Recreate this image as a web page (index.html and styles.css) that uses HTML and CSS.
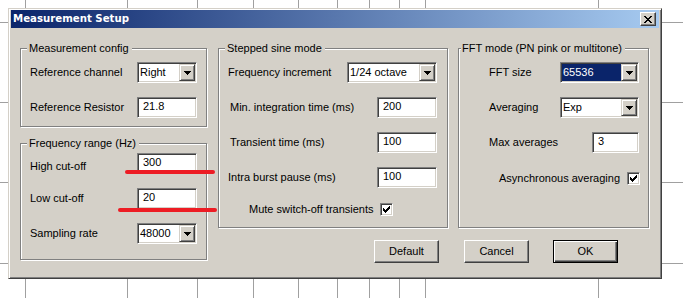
FILE: index.html
```html
<!DOCTYPE html>
<html>
<head>
<meta charset="utf-8">
<title>Measurement Setup</title>
<link rel="stylesheet" href="styles.css">
</head>
<body>
<div class="stage">
  <svg class="grid" width="683" height="298" viewBox="0 0 683 298" shape-rendering="crispEdges">
    <g stroke="#a0a0a0" stroke-width="1">
      <line x1="25.5" y1="0" x2="25.5" y2="298"/>
      <line x1="127.5" y1="0" x2="127.5" y2="298"/>
      <line x1="197.5" y1="0" x2="197.5" y2="298"/>
      <line x1="253.5" y1="0" x2="253.5" y2="298"/>
      <line x1="298.5" y1="0" x2="298.5" y2="298"/>
      <line x1="337.5" y1="0" x2="337.5" y2="298"/>
      <line x1="369.5" y1="0" x2="369.5" y2="298"/>
      <line x1="399.5" y1="0" x2="399.5" y2="298"/>
      <line x1="425.5" y1="0" x2="425.5" y2="298"/>
      <line x1="598.5" y1="0" x2="598.5" y2="298"/>
      <line x1="0" y1="22.5" x2="683" y2="22.5"/>
      <line x1="0" y1="102.5" x2="683" y2="102.5"/>
      <line x1="0" y1="182.5" x2="683" y2="182.5"/>
      <line x1="0" y1="263.5" x2="683" y2="263.5"/>
    </g>
  </svg>

  <div class="dialog">
    <div class="titlebar">
      <span class="title">Measurement Setup</span>
      <span class="close-btn">
        <svg width="8" height="7" viewBox="0 0 8 7" shape-rendering="crispEdges"><path fill="#000" d="M0 0h2v1h-2z M6 0h2v1h-2z M1 1h2v1h-2z M5 1h2v1h-2z M2 2h4v1h-4z M3 3h2v1h-2z M2 4h4v1h-4z M1 5h2v1h-2z M5 5h2v1h-2z M0 6h2v1h-2z M6 6h2v1h-2z"/></svg>
      </span>
    </div>

    <div class="client">
      <div class="col-left">
        <div class="group g1">
          <span class="legend">Measurement config</span>
          <div class="row">
            <span class="lbl">Reference channel</span>
            <div class="combo w60"><span class="val">Right</span><span class="drop"><svg width="7" height="4" viewBox="0 0 7 4" shape-rendering="crispEdges"><path fill="#000" d="M0 0H7V1H6V2H5V3H4V4H3V3H2V2H1V1H0Z"/></svg></span></div>
          </div>
          <div class="row">
            <span class="lbl">Reference Resistor</span>
            <div class="edit w60">21.8</div>
          </div>
        </div>

        <div class="group g2">
          <span class="legend">Frequency range (Hz)</span>
          <div class="row">
            <span class="lbl lbl-low">High cut-off</span>
            <div class="edit w60">300</div>
          </div>
          <div class="row">
            <span class="lbl">Low cut-off</span>
            <div class="edit w60">20</div>
          </div>
          <div class="row">
            <span class="lbl">Sampling rate</span>
            <div class="combo w60"><span class="val">48000</span><span class="drop"><svg width="7" height="4" viewBox="0 0 7 4" shape-rendering="crispEdges"><path fill="#000" d="M0 0H7V1H6V2H5V3H4V4H3V3H2V2H1V1H0Z"/></svg></span></div>
          </div>
        </div>
      </div>

      <div class="col-right">
        <div class="group g3">
          <span class="legend">Stepped sine mode</span>
          <div class="row">
            <span class="lbl">Frequency increment</span>
            <div class="combo w89"><span class="val">1/24 octave</span><span class="drop"><svg width="7" height="4" viewBox="0 0 7 4" shape-rendering="crispEdges"><path fill="#000" d="M0 0H7V1H6V2H5V3H4V4H3V3H2V2H1V1H0Z"/></svg></span></div>
          </div>
          <div class="row">
            <span class="lbl ind">Min. integration time (ms)</span>
            <div class="edit w60">200</div>
          </div>
          <div class="row">
            <span class="lbl ind">Transient time (ms)</span>
            <div class="edit w60">100</div>
          </div>
          <div class="row">
            <span class="lbl">Intra burst pause (ms)</span>
            <div class="edit w60">100</div>
          </div>
          <div class="chkrow chk-mute">
            <span class="lbl-c">Mute switch-off transients</span>
            <span class="check"><svg width="7" height="7" viewBox="0 0 7 7" shape-rendering="crispEdges"><path fill="#000" d="M0 2H1V3H2V4H3V3H4V2H5V1H6V0H7V3H6V4H5V5H4V6H3V7H2V6H1V5H0Z"/></svg></span>
          </div>
        </div>

        <div class="group g4">
          <span class="legend">FFT mode (PN pink or multitone)</span>
          <div class="row">
            <span class="lbl">FFT size</span>
            <div class="combo w79"><span class="val selected">65536</span><span class="drop"><svg width="7" height="4" viewBox="0 0 7 4" shape-rendering="crispEdges"><path fill="#000" d="M0 0H7V1H6V2H5V3H4V4H3V3H2V2H1V1H0Z"/></svg></span></div>
          </div>
          <div class="row">
            <span class="lbl">Averaging</span>
            <div class="combo w79"><span class="val">Exp</span><span class="drop"><svg width="7" height="4" viewBox="0 0 7 4" shape-rendering="crispEdges"><path fill="#000" d="M0 0H7V1H6V2H5V3H4V4H3V3H2V2H1V1H0Z"/></svg></span></div>
          </div>
          <div class="row">
            <span class="lbl">Max averages</span>
            <div class="edit w47">3</div>
          </div>
          <div class="chkrow chk-async">
            <span class="lbl-c">Asynchronous averaging</span>
            <span class="check"><svg width="7" height="7" viewBox="0 0 7 7" shape-rendering="crispEdges"><path fill="#000" d="M0 2H1V3H2V4H3V3H4V2H5V1H6V0H7V3H6V4H5V5H4V6H3V7H2V6H1V5H0Z"/></svg></span>
          </div>
        </div>

        <div class="btns-a">
          <span class="btn">Default</span>
        </div>
        <div class="btns-b">
          <span class="btn">Cancel</span>
          <span class="btn btn-default">OK</span>
        </div>
      </div>
    </div>
  </div>

  <div class="mark mark1"></div>
  <div class="mark mark2"></div>
</div>
</body>
</html>
```

FILE: styles.css
```css
* { box-sizing: border-box; }
html, body { margin: 0; padding: 0; }
body {
  background: #fff;
  font-family: "Liberation Sans", Arial, sans-serif;
  font-size: 11px;
  color: #000;
}
.stage {
  position: relative;
  width: 683px;
  height: 298px;
  overflow: hidden;
  background: #fff;
}
.grid { position: absolute; left: 0; top: 0; }

.dialog {
  position: absolute;
  left: 8px;
  top: 8px;
  width: 654px;
  height: 271px;
  background: #d4d0c8;
  border: 1px solid;
  border-color: #d4d0c8 #404040 #404040 #d4d0c8;
  box-shadow: inset 1px 1px #fff, inset -1px -1px #808080;
  padding: 1px 2px 2px 2px;
  display: flex;
  flex-direction: column;
}
.titlebar {
  height: 18px;
  flex: none;
  display: flex;
  align-items: center;
  justify-content: space-between;
  padding: 0 3px 0 2px;
  background: linear-gradient(to right, #0a246a, #a6caf0);
}
.title {
  color: #fff;
  font-family: "DejaVu Sans", Verdana, sans-serif;
  font-weight: bold;
  font-size: 10.2px;
  line-height: 18px;
  white-space: nowrap;
}
.close-btn {
  width: 16px;
  height: 14px;
  display: flex;
  align-items: center;
  justify-content: center;
  background: #d4d0c8;
  border: 1px solid;
  border-color: #fff #404040 #404040 #fff;
  box-shadow: inset -1px -1px #808080, inset 1px 1px #d4d0c8;
}

.client {
  display: flex;
  gap: 11px;
  padding: 20px 0 0 9px;
}
.col-left {
  width: 187px;
  flex: none;
  display: flex;
  flex-direction: column;
  gap: 16px;
}
.col-right {
  display: grid;
  grid-template-columns: 230px 191px;
  column-gap: 10px;
  row-gap: 12px;
  align-content: start;
}

.group {
  position: relative;
  border: 1px solid #808080;
  box-shadow: inset 1px 1px #fff, 1px 1px #fff;
  display: flex;
  flex-direction: column;
  gap: 14px;
}
.g1 { height: 79px; padding: 13px 9px 0 9px; }
.g2 { height: 117px; padding: 9px 9px 0 9px; }
.g3 { height: 180px; padding: 13px 10px 0 9px; }
.g4 { height: 180px; padding: 13px 9px 0 30px; }

.legend {
  position: absolute;
  top: -7px;
  left: 6px;
  padding: 0 3px 0 2px;
  background: #d4d0c8;
  line-height: 13px;
  white-space: nowrap;
}
.g4 .legend { left: 2px; padding-left: 1px; }

.row {
  display: flex;
  align-items: center;
  height: 21px;
}
.lbl {
  flex: 1;
  white-space: nowrap;
  line-height: 13px;
}
.lbl.ind { padding-left: 2px; }
.lbl.lbl-low { padding-top: 6px; }

.edit {
  height: 21px;
  flex: none;
  display: flex;
  align-items: center;
  padding: 0 0 2px 5px;
  background: #fff;
  border: 1px solid;
  border-color: #808080 #fff #fff #808080;
  box-shadow: inset 1px 1px #404040, inset -1px -1px #d4d0c8;
  line-height: 13px;
}
.combo {
  height: 21px;
  flex: none;
  display: flex;
  padding: 1px;
  background: #fff;
  border: 1px solid;
  border-color: #808080 #fff #fff #808080;
  box-shadow: inset 1px 1px #404040, inset -1px -1px #d4d0c8;
}
.w60 { width: 60px; }
.w47 { width: 47px; }
.w79 { width: 79px; }
.w89 { width: 90px; }
.val {
  flex: 1;
  display: flex;
  align-items: center;
  padding-left: 1px;
  line-height: 13px;
  white-space: nowrap;
  overflow: hidden;
}
.val.selected { background: #0a246a; color: #fff; }
.drop {
  width: 16px;
  flex: none;
  display: flex;
  align-items: center;
  justify-content: center;
  background: #d4d0c8;
  border: 1px solid;
  border-color: #d4d0c8 #404040 #404040 #d4d0c8;
  box-shadow: inset 1px 1px #fff, inset -1px -1px #808080;
}

.chkrow {
  display: flex;
  align-items: center;
  height: 13px;
}
.lbl-c { white-space: nowrap; line-height: 13px; }
.chk-mute { margin-top: 1px; margin-left: 21px; gap: 6px; }
.chk-async { margin-top: 5px; margin-right: -1px; justify-content: flex-end; gap: 7px; }
.check {
  width: 13px;
  height: 13px;
  flex: none;
  display: flex;
  align-items: center;
  justify-content: center;
  background: #fff;
  border: 1px solid;
  border-color: #808080 #fff #fff #808080;
  box-shadow: inset 1px 1px #404040, inset -1px -1px #d4d0c8;
}

.btns-a { justify-self: end; margin-right: 9px; }
.btns-b { display: flex; gap: 24px; padding-left: 6px; }
.btn {
  width: 65px;
  height: 23px;
  display: flex;
  align-items: center;
  justify-content: center;
  padding-bottom: 1px;
  background: #d4d0c8;
  border: 1px solid;
  border-color: #fff #404040 #404040 #fff;
  box-shadow: inset -1px -1px #808080, inset 1px 1px #d4d0c8;
  white-space: nowrap;
}
.btn.btn-default {
  border-color: #000;
  box-shadow: inset 1px 1px #fff, inset -1px -1px #404040, inset -2px -2px #808080;
}

.mark {
  position: absolute;
  height: 4px;
  background: #ed1c24;
  border-radius: 2px;
}
.mark1 { left: 125px; top: 170px; width: 90px; }
.mark2 { left: 118px; top: 208px; width: 99px; }
```
